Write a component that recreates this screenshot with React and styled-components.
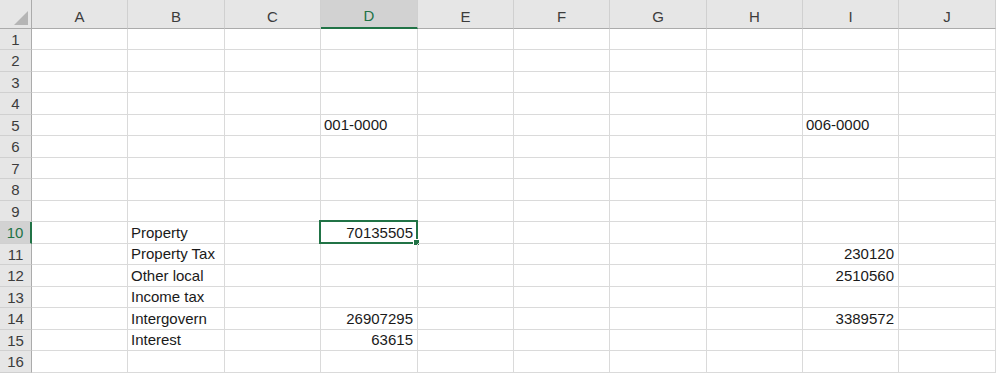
import styled, { createGlobalStyle } from "styled-components";

const GlobalStyle = createGlobalStyle`
    body {
        margin: 0;
        background: #fff;
        font-family: "Liberation Sans", Arial, sans-serif;
        overflow: hidden;
    }
`;

const COLS = ["A", "B", "C", "D", "E", "F", "G", "H", "I", "J"];
const COL_WIDTHS = [96, 97, 96, 97, 96, 96, 97, 96, 96, 97];
const ROW_HEIGHTS = Array.from({ length: 16 }, (_, i) => (i % 2 === 0 ? 21 : 22));

const SEL_COL = "D";
const SEL_ROW = 10;

const cells = {
    D5: { text: "001-0000" },
    I5: { text: "006-0000" },
    B10: { text: "Property" },
    D10: { text: "70135505", num: true },
    B11: { text: "Property Tax" },
    I11: { text: "230120", num: true },
    B12: { text: "Other local" },
    I12: { text: "2510560", num: true },
    B13: { text: "Income tax" },
    B14: { text: "Intergovern" },
    D14: { text: "26907295", num: true },
    I14: { text: "3389572", num: true },
    B15: { text: "Interest" },
    D15: { text: "63615", num: true },
};

const Sheet = styled.div`
    display: grid;
    grid-template-columns: 32px ${COL_WIDTHS.map(w => w + "px").join(" ")};
    grid-template-rows: 29px ${ROW_HEIGHTS.map(h => h + "px").join(" ")};
    width: max-content;
`;

const Corner = styled.div`
    box-sizing: border-box;
    position: relative;
    background: #e6e6e6;
    border-right: 1px solid #ababab;
    border-bottom: 1px solid #ababab;
    &::after {
        content: "";
        position: absolute;
        right: 3px;
        bottom: 3px;
        width: 0;
        height: 0;
        border-left: 14px solid transparent;
        border-bottom: 14px solid #b5b5b5;
    }
`;

const ColHeader = styled.div`
    box-sizing: border-box;
    display: flex;
    align-items: center;
    justify-content: center;
    padding-top: 4px;
    font-size: 15px;
    color: ${p => (p.$active ? "#217346" : "#3c3c3c")};
    background: ${p => (p.$active ? "#d2d2d2" : "#e6e6e6")};
    border-right: 1px solid #d0d0d0;
    border-bottom: ${p => (p.$active ? "2px solid #217346" : "1px solid #ababab")};
`;

const RowHeader = styled.div`
    box-sizing: border-box;
    display: flex;
    align-items: center;
    justify-content: center;
    font-size: 15px;
    color: ${p => (p.$active ? "#217346" : "#3c3c3c")};
    background: ${p => (p.$active ? "#d2d2d2" : "#e6e6e6")};
    border-right: ${p => (p.$active ? "2px solid #217346" : "1px solid #ababab")};
    border-bottom: 1px solid #d0d0d0;
`;

const Cell = styled.div`
    box-sizing: border-box;
    position: relative;
    display: flex;
    align-items: flex-end;
    justify-content: ${p => (p.$num ? "flex-end" : "flex-start")};
    padding: 0 4px 2px 3px;
    font-size: 15px;
    color: #1a1a1a;
    white-space: nowrap;
    border-right: 1px solid #dadada;
    border-bottom: 1px solid #dadada;
`;

const Selection = styled.div`
    position: absolute;
    left: -2px;
    top: -2px;
    right: -1px;
    bottom: -1px;
    border: 2px solid #217346;
    pointer-events: none;
    &::after {
        content: "";
        position: absolute;
        right: -4px;
        bottom: -4px;
        width: 5px;
        height: 5px;
        background: #217346;
        border: 1px solid #fff;
    }
`;

export default function App() {
    return (
        <>
            <GlobalStyle />
            <Sheet>
                <Corner />
                {COLS.map(c => (
                    <ColHeader key={c} $active={c === SEL_COL}>{c}</ColHeader>
                ))}
                {ROW_HEIGHTS.map((_, i) => {
                    const row = i + 1;
                    return [
                        <RowHeader key={"h" + row} $active={row === SEL_ROW}>{row}</RowHeader>,
                        ...COLS.map(c => {
                            const ref = c + row;
                            const cell = cells[ref];
                            const selected = c === SEL_COL && row === SEL_ROW;
                            return (
                                <Cell key={ref} $num={cell?.num}>
                                    {cell?.text}
                                    {selected && <Selection />}
                                </Cell>
                            );
                        }),
                    ];
                })}
            </Sheet>
        </>
    );
}
